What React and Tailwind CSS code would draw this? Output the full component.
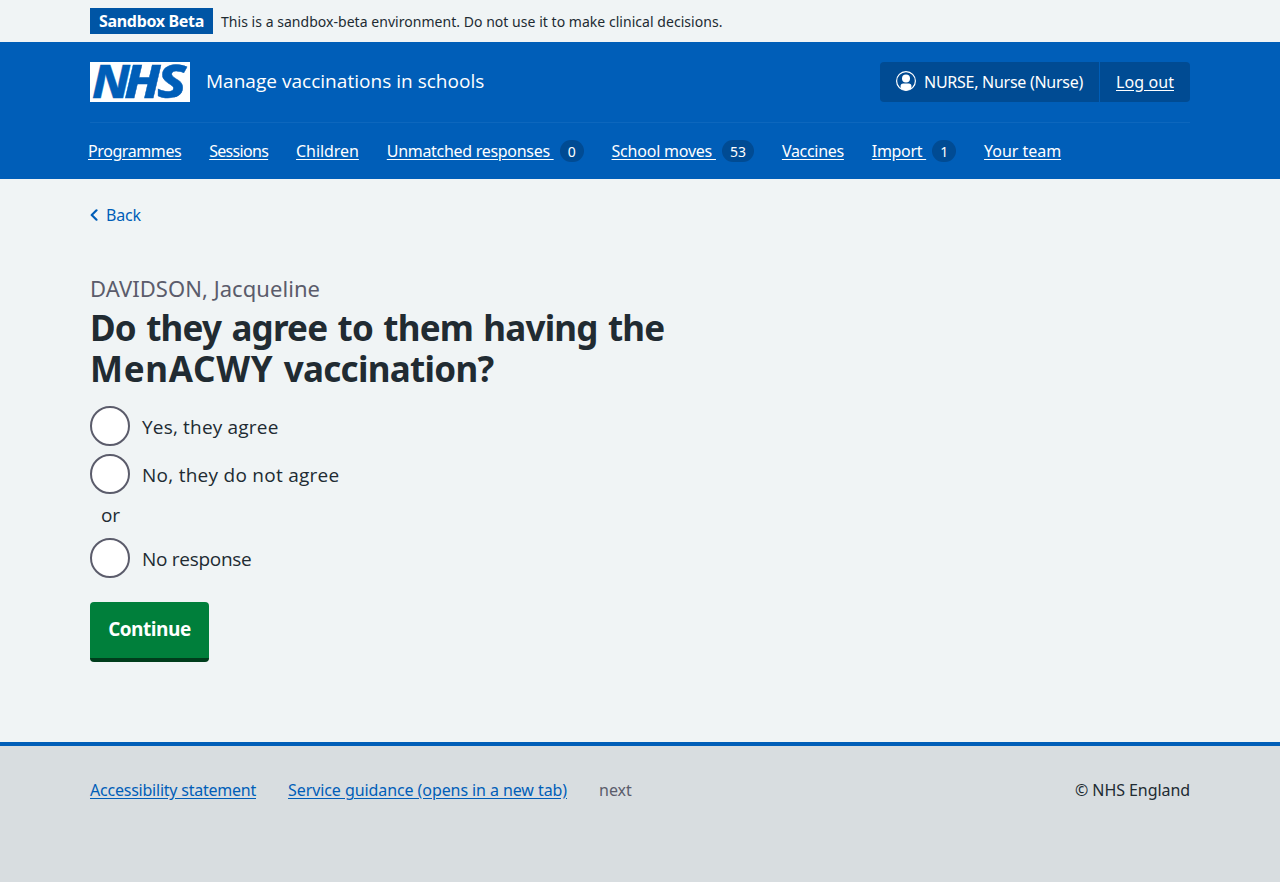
import React from "react";

const NAV = [
  { label: "Programmes", track: "tracking-[-0.408px]" },
  { label: "Sessions", track: "tracking-[-0.688px]" },
  { label: "Children", track: "tracking-[-0.062px]" },
  { label: "Unmatched responses", track: "tracking-[-0.296px]", count: 0 },
  { label: "School moves", track: "tracking-[-0.22px]", count: 53 },
  { label: "Vaccines", track: "tracking-[-0.291px]" },
  { label: "Import", track: "tracking-[-0.299px]", count: 1 },
  { label: "Your team", track: "tracking-[-0.038px]" },
];

function NhsLogo() {
  return (
    <svg width="100" height="40" viewBox="0 0 100 40" role="img" aria-label="NHS" className="block">
      <rect width="100" height="40" fill="#fff" />
      <g fill="#005eb8" stroke="#005eb8" strokeWidth="0.4" fontFamily="'Noto Sans', sans-serif" fontWeight="800" fontStyle="italic" fontSize="45.5">
        <text x="1.9" y="36" textLength="38" lengthAdjust="spacingAndGlyphs">N</text>
        <text x="34.200" y="36" textLength="36.5" lengthAdjust="spacingAndGlyphs">H</text>
        <text x="67" y="36" textLength="29.5" lengthAdjust="spacingAndGlyphs">S</text>
      </g>
    </svg>
  );
}

function UserIcon() {
  return (
    <svg width="20" height="20" viewBox="0 0 20 20" className="block shrink-0" aria-hidden="true">
      <circle cx="10" cy="10" r="9.400" fill="none" stroke="#fff" strokeWidth="1.200" />
      <circle cx="10" cy="7.600" r="4" fill="#fff" />
      <path d="M4.600 17.600V15a2.600 2.600 0 0 1 2.600-2.600h5.600A2.600 2.600 0 0 1 15.400 15v2.600A9.500 9.500 0 0 1 4.600 17.600Z" fill="#fff" />
    </svg>
  );
}

function Container({ className = "", children }) {
  return <div className={"mx-auto w-[1100px] " + className}>{children}</div>;
}

function Radio({ label, track }) {
  return (
    <label className="flex h-10 items-center gap-3">
      <input type="radio" name="agree" className="size-10 shrink-0 appearance-none rounded-full border-2 border-[#5b5c6b] bg-white" />
      <span className={"mt-[2px] font-['Open_Sans',sans-serif] text-[19px] leading-7 " + track}>{label}</span>
    </label>
  );
}

export default function App() {
  return (
    <div className="flex h-[882px] flex-col overflow-hidden whitespace-nowrap bg-[#f0f4f5] font-['Noto_Sans','Open_Sans',sans-serif] text-base text-[#212b32]">
      <div className="h-[42px]">
        <Container className="flex h-full items-center gap-2">
          <strong className="flex h-[26px] w-[123px] items-center justify-center bg-[#0055a5] font-bold leading-6 tracking-[-0.32px] text-white">Sandbox Beta</strong>
          <span className="mt-px text-sm tracking-[0.036px]">This is a sandbox-beta environment. Do not use it to make clinical decisions.</span>
        </Container>
      </div>

      <header className="h-[137px] bg-[#005eb8] text-white">
        <Container className="flex h-[81px] items-center border-b border-[#0d67bd]">
          <NhsLogo />
          <span className="mb-[2px] ml-4 font-['Open_Sans',sans-serif] text-[19px] leading-7 tracking-[0.025px]">Manage vaccinations in schools</span>
          <div className="ml-auto flex h-10 overflow-hidden rounded bg-[#004b93]">
            <span className="flex w-[220px] items-center gap-2 border-r border-[#005eb8] pl-4">
              <span className="mb-[2px]"><UserIcon /></span>
              <span className="tracking-[-0.27px]">NURSE, Nurse (Nurse)</span>
            </span>
            <span className="flex w-[90px] items-center justify-center">
              <a className="tracking-[0.083px] underline underline-offset-2">Log out</a>
            </span>
          </div>
        </Container>
        <Container>
          <nav className="-ml-[2px] flex h-14 items-center gap-[27.9px]">
            {NAV.map((n) => (
              <a key={n.label} className="flex items-center">
                <span className={"whitespace-pre underline underline-offset-2 " + n.track}>{n.count === undefined ? n.label : n.label + " "}</span>
                {n.count !== undefined && (
                  <span className="ml-[6px] flex h-[22px] min-w-6 items-center justify-center rounded-full bg-[#004b93] px-2 pt-px text-sm leading-5">{n.count}</span>
                )}
              </a>
            ))}
          </nav>
        </Container>
      </header>

      <main className="flex-1">
        <Container>
          <a className="mt-6 flex h-6 items-center gap-2 leading-6 tracking-[-0.152px] text-[#005eb8]">
            <svg width="8" height="12" viewBox="0 0 8 12" className="block" aria-hidden="true">
              <path d="M6.500 1.300 1.700 6l4.800 4.700" fill="none" stroke="#005eb8" strokeWidth="2.200" strokeLinecap="round" strokeLinejoin="round" />
            </svg>
            <span>Back</span>
          </a>
          <h1 className="mt-[45px]">
            <span className="block text-[22px] leading-8 tracking-[0.054px] text-[#5b5c6b]">DAVIDSON, Jacqueline</span>
            <span className="mt-[3px] block text-[35px] font-bold leading-[41px] tracking-[-0.8px] [word-spacing:2px]">Do they agree to them having the</span>
            <span className="block text-[35px] font-bold leading-[41px] tracking-[-0.7px] [word-spacing:2px]"><span className="tracking-[0.700px]">MenACWY</span> vaccination?</span>
          </h1>
          <div className="mt-[17px] flex flex-col gap-2">
            <Radio label="Yes, they agree" track="tracking-[0.184px]" />
            <Radio label="No, they do not agree" track="tracking-[0.266px]" />
            <div className="h-7 w-[41px] text-center font-['Open_Sans',sans-serif] text-[19px] leading-[26px]">or</div>
            <Radio label="No response" track="tracking-[-0.281px]" />
          </div>
          <button className="mt-6 h-[60px] w-[119px] rounded border-b-4 border-[#003d1c] bg-[#007f3b] pb-[2px] font-['Open_Sans',sans-serif] text-[19px] font-bold leading-7 tracking-[-0.5px] text-white">Continue</button>
        </Container>
      </main>

      <footer className="h-[140px] border-t-4 border-[#005eb8] bg-[#d8dde0]">
        <Container className="flex items-center pt-8 leading-6">
          <a className="tracking-[-0.228px] text-[#005eb8] underline underline-offset-2">Accessibility statement</a>
          <a className="ml-8 tracking-[-0.083px] text-[#005eb8] underline underline-offset-2">Service guidance (opens in a new tab)</a>
          <span className="ml-8 text-[#5b5c6b]">next</span>
          <span className="ml-auto tracking-[-0.069px]">© NHS England</span>
        </Container>
      </footer>
    </div>
  );
}
